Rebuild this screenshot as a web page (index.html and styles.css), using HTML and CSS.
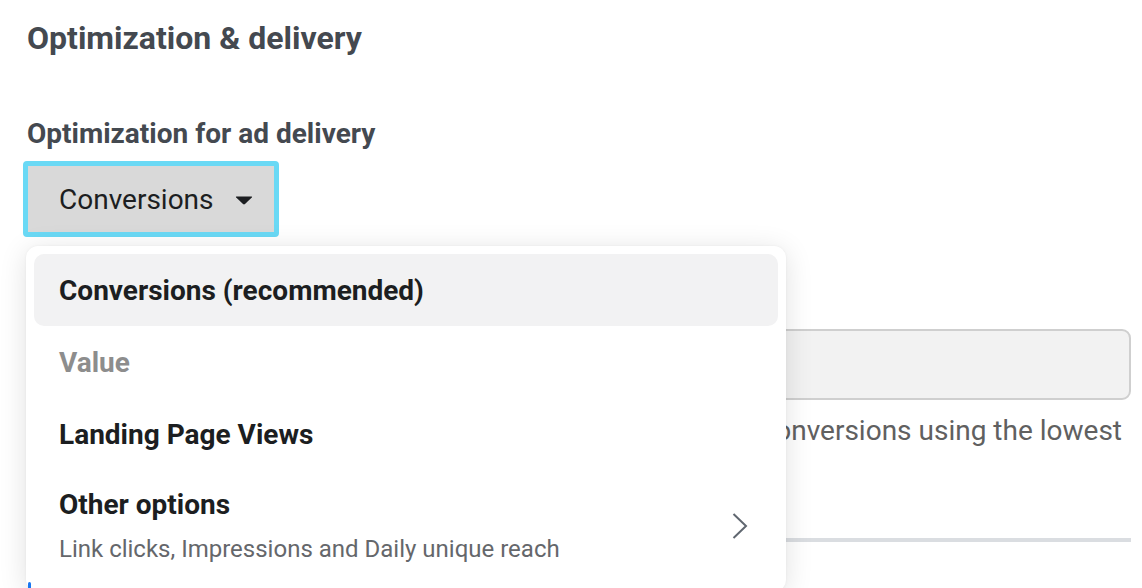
FILE: index.html
```html
<!DOCTYPE html>
<html lang="en">
<head>
    <meta charset="UTF-8">
    <meta name="viewport" content="width=device-width, initial-scale=1.0">
    <title>Optimization &amp; delivery</title>
    <link rel="stylesheet" href="styles.css">
</head>
<body>
    <div class="page">
        <h2 class="section-title">Optimization &amp; delivery</h2>

        <div class="field">
            <div class="field-label">Optimization for ad delivery</div>
            <div class="select-wrap">
                <button class="select-btn">
                    <span>Conversions</span>
                    <svg class="caret" width="18" height="9" viewBox="0 0 18 9">
                        <path d="M1.5 0.5 H16.5 Q17.6 0.5 16.8 1.4 L10 8 Q9 8.9 8 8 L1.2 1.4 Q0.4 0.5 1.5 0.5 Z" fill="#1c1e21"/>
                    </svg>
                </button>

                <div class="menu">
                    <div class="menu-item active">Conversions (recommended)</div>
                    <div class="menu-item disabled">Value</div>
                    <div class="menu-item">Landing Page Views</div>
                    <div class="menu-item has-sub">
                        <div>
                            <div>Other options</div>
                            <div class="menu-sub">Link clicks, Impressions and Daily unique reach</div>
                        </div>
                        <svg class="chevron" width="16" height="26" viewBox="0 0 16 26">
                            <path d="M1.5 1 L14 13 L1.5 25" fill="none" stroke="#606770" stroke-width="2"/>
                        </svg>
                    </div>
                </div>
            </div>
        </div>

        <div class="field behind">
            <div class="field-label">Conversion event</div>
            <div class="input-box"></div>
            <div class="help"><span>We'll deliver your ads to the right people to help you get the most conversions using the lowest</span></div>
            <div class="divider"></div>
            <span class="blue-dot"></span>
        </div>
    </div>
</body>
</html>
```

FILE: styles.css
```css
body {
    margin: 0;
    padding: 0;
    background-color: #ffffff;
    font-family: Roboto, "Liberation Sans", Arial, sans-serif;
}
.page {
    min-height: 588px;
    padding: 0 11px 0 27px;
}
.section-title {
    margin: 0;
    padding-top: 19px;
    font-size: 32px;
    line-height: 38px;
    font-weight: bold;
    color: #444950;
}
.field {
    margin-top: 60px;
}
.field-label {
    font-size: 28px;
    line-height: 34px;
    font-weight: bold;
    color: #444950;
}
.select-wrap {
    position: relative;
    margin-top: 10px;
    margin-left: -4px;
}
.select-btn {
    display: flex;
    align-items: center;
    gap: 21px;
    height: 76px;
    padding: 0 21px 0 31px;
    background-color: #d9d9d9;
    border: 5px solid #6ad9f5;
    border-radius: 4px;
    font-family: inherit;
    font-size: 28px;
    color: #1c1e21;
    cursor: pointer;
}
.caret {
    margin-top: 2px;
}
.menu {
    position: absolute;
    top: 85px;
    left: 3px;
    z-index: 2;
    width: 744px;
    padding: 8px;
    background-color: #ffffff;
    border-radius: 12px;
    box-shadow: 0 4px 28px rgba(0, 0, 0, 0.12), 0 0 3px rgba(0, 0, 0, 0.05);
}
.menu-item {
    display: flex;
    align-items: center;
    height: 72px;
    padding: 0 25px;
    border-radius: 10px;
    font-size: 28px;
    font-weight: bold;
    color: #1c1e21;
}
.menu-item.active {
    background-color: #f2f2f3;
}
.menu-item.disabled {
    color: #8d8d8d;
}
.menu-item.has-sub {
    justify-content: space-between;
    align-items: flex-start;
    height: auto;
    padding-top: 18px;
    padding-bottom: 20px;
    line-height: 34px;
}
.menu-sub {
    margin-top: 12px;
    font-size: 24px;
    line-height: 30px;
    font-weight: normal;
    color: #65676b;
}
.chevron {
    margin-top: 25px;
    margin-right: 5px;
}
.behind {
    position: relative;
    margin-top: 52px;
}
.input-box {
    margin-top: 6px;
    height: 67px;
    background-color: #f2f2f2;
    border: 2px solid #cfcfcf;
    border-radius: 9px;
}
.help {
    display: flex;
    justify-content: flex-end;
    margin-top: 14px;
    padding-right: 9px;
    white-space: nowrap;
    overflow: hidden;
    font-size: 28px;
    line-height: 34px;
    color: #606060;
}
.divider {
    margin-top: 90px;
    height: 4px;
    background-color: #dadde1;
}
.blue-dot {
    position: absolute;
    z-index: 3;
    left: 1px;
    bottom: -46px;
    width: 3px;
    height: 6px;
    border-radius: 2px 2px 0 0;
    background-color: #1877f2;
}
```
